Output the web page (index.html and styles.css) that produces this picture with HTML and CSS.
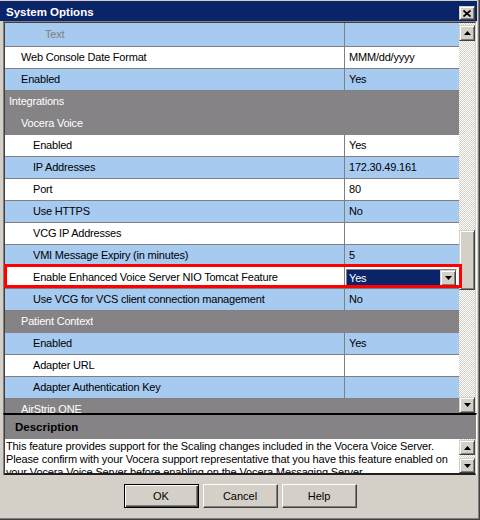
FILE: index.html
```html
<!DOCTYPE html>
<html>
<head>
<meta charset="utf-8">
<link rel="stylesheet" href="styles.css">
</head>
<body>
<div class="window">
  <div class="titlebar">
    <span class="title">System Options</span>
    <span class="close btn3d">
      <svg width="8" height="7" viewBox="0 0 8 7"><path d="M0.5 0.5 L7.5 6.5 M7.5 0.5 L0.5 6.5" stroke="#000" stroke-width="1.7" fill="none"/></svg>
    </span>
  </div>

  <div class="grid-panel">
    <div class="grid-inner">
      <div class="rows">
        <div class="row blue first"><div class="label l3 disabled">Text</div><div class="value"></div></div>
        <div class="row white"><div class="label l1">Web Console Date Format</div><div class="value">MMM/dd/yyyy</div></div>
        <div class="row blue"><div class="label l1">Enabled</div><div class="value">Yes</div></div>
        <div class="row section"><div class="label l0">Integrations</div></div>
        <div class="row section"><div class="label l1">Vocera Voice</div></div>
        <div class="row white"><div class="label l2">Enabled</div><div class="value">Yes</div></div>
        <div class="row blue"><div class="label l2">IP Addresses</div><div class="value">172.30.49.161</div></div>
        <div class="row white"><div class="label l2">Port</div><div class="value">80</div></div>
        <div class="row blue"><div class="label l2">Use HTTPS</div><div class="value">No</div></div>
        <div class="row white"><div class="label l2">VCG IP Addresses</div><div class="value"></div></div>
        <div class="row blue"><div class="label l2">VMI Message Expiry (in minutes)</div><div class="value">5</div></div>
        <div class="row white"><div class="label l2">Enable Enhanced Voice Server NIO Tomcat Feature</div>
          <div class="value combo-cell">
            <div class="combo">
              <div class="combo-field">Yes</div>
              <div class="combo-btn btn3d"><svg width="7" height="4" viewBox="0 0 7 4"><polygon points="0,0 7,0 3.5,4" fill="#000"/></svg></div>
            </div>
          </div>
        </div>
        <div class="row blue"><div class="label l2">Use VCG for VCS client connection management</div><div class="value">No</div></div>
        <div class="row section"><div class="label l1">Patient Context</div></div>
        <div class="row blue"><div class="label l2">Enabled</div><div class="value">Yes</div></div>
        <div class="row white"><div class="label l2">Adapter URL</div><div class="value"></div></div>
        <div class="row blue"><div class="label l2">Adapter Authentication Key</div><div class="value"></div></div>
        <div class="row section"><div class="label l1">AirStrip ONE</div></div>
      </div>
      <div class="vscroll">
        <div class="sbtn btn3d up"><svg width="7" height="4" viewBox="0 0 7 4"><polygon points="0,4 7,4 3.5,0" fill="#000"/></svg></div>
        <div class="track-pre"></div>
        <div class="thumb btn3d"></div>
        <div class="track-post"></div>
        <div class="sbtn btn3d"><svg width="7" height="4" viewBox="0 0 7 4"><polygon points="0,0 7,0 3.5,4" fill="#000"/></svg></div>
      </div>
      <div class="highlight"></div>
    </div>
  </div>

  <div class="desc">
    <div class="desc-head">Description</div>
    <div class="desc-body">
      <div class="desc-text">This feature provides support for the Scaling changes included in the Vocera Voice Server.<br>Please confirm with your Vocera support representative that you have this feature enabled on<br>your Vocera Voice Server before enabling on the Vocera Messaging Server.</div>
      <div class="vscroll small">
        <div class="sbtn btn3d up"><svg width="7" height="4" viewBox="0 0 7 4"><polygon points="0,4 7,4 3.5,0" fill="#000"/></svg></div>
        <div class="track-post"></div>
        <div class="sbtn btn3d"><svg width="7" height="4" viewBox="0 0 7 4"><polygon points="0,0 7,0 3.5,4" fill="#000"/></svg></div>
      </div>
    </div>
  </div>

  <div class="buttons">
    <div class="button default">OK</div>
    <div class="button">Cancel</div>
    <div class="button">Help</div>
  </div>
</div>
</body>
</html>
```
FILE: styles.css
```css
html, body {
  margin: 0;
  padding: 0;
  background: #d4d0c8;
}
body {
  font-family: "Liberation Sans", Arial, sans-serif;
  font-size: 11px;
  color: #000;
}
.window {
  width: 480px;
  height: 520px;
  box-sizing: border-box;
  background: #d4d0c8;
  box-shadow: inset -1px -1px #404040, inset -2px -2px #808080;
  display: flex;
  flex-direction: column;
  overflow: hidden;
}
.btn3d {
  box-sizing: border-box;
  background: #d4d0c8;
  border: 1px solid;
  border-color: #d4d0c8 #404040 #404040 #d4d0c8;
  box-shadow: inset 1px 1px #fff, inset -1px -1px #808080;
  display: flex;
  align-items: center;
  justify-content: center;
}
.titlebar {
  margin: 1px 3px 0 0;
  height: 20px;
  box-sizing: border-box;
  background: #0a246a;
  color: #fff;
  display: flex;
  align-items: flex-end;
  justify-content: space-between;
  padding: 0 2px 1px 6px;
}
.title {
  font-weight: bold;
  font-size: 11.5px;
  line-height: 15px;
}
.close {
  width: 16px;
  height: 14px;
}

/* grid */
.grid-panel {
  margin: 0 3px;
  border-top: 1px solid #808080;
  border-left: 1px solid #808080;
  border-right: 1px solid #fff;
}
.grid-inner {
  position: relative;
  display: flex;
  height: 390px;
  border-top: 1px solid #404040;
  border-left: 1px solid #404040;
  border-right: 1px solid #d4d0c8;
}
.rows {
  width: 454px;
  height: 390px;
  overflow: hidden;
  letter-spacing: -0.2px;
}
.row {
  display: flex;
  height: 21px;
  line-height: 21px;
  border-bottom: 1px solid #808080;
  white-space: nowrap;
}
.row.first {
  height: 23px;
  line-height: 23px;
}
.row.blue { background: #a6caf0; }
.row.white { background: #fff; }
.row.section {
  background: #858385;
  color: #fff;
  border-bottom-color: #858385;
}
.label {
  width: 339px;
  overflow: hidden;
  box-sizing: border-box;
}
.section .label { width: auto; }
.l0 { padding-left: 4px; }
.l1 { padding-left: 16px; }
.l2 { padding-left: 28px; }
.l3 { padding-left: 40px; }
.disabled { color: #808080; }
.value {
  width: 115px;
  box-sizing: border-box;
  border-left: 1px solid #808080;
  padding-left: 4px;
  overflow: hidden;
}
.combo-cell {
  padding-left: 1px;
  display: flex;
  align-items: center;
}
.combo {
  width: 111px;
  height: 18px;
  box-sizing: border-box;
  border: 1px solid;
  border-color: #808080 #fff #fff #808080;
  display: flex;
}
.combo-field {
  flex: 1;
  background: #0a246a;
  color: #fff;
  line-height: 16px;
  padding-left: 2px;
}
.combo-btn {
  width: 16px;
  height: 16px;
}
.highlight {
  position: absolute;
  left: -1px;
  top: 241px;
  width: 458px;
  height: 24px;
  box-sizing: border-box;
  border: 3px solid #ff0000;
  z-index: 5;
}

/* scrollbars */
.vscroll {
  width: 16px;
  display: flex;
  flex-direction: column;
  background-color: #fff;
  background-image: repeating-conic-gradient(#d4d0c8 0 25%, #fff 0 50%);
  background-size: 2px 2px;
}
.sbtn {
  width: 16px;
  height: 16px;
  flex: none;
}
.sbtn.up { margin-top: 2px; }
.track-pre { height: 189px; flex: none; }
.thumb { height: 60px; flex: none; }
.track-post { flex: 1; }
.vscroll.small .sbtn { height: 15px; }
.vscroll.small .sbtn.up { margin-top: 1px; }

/* description */
.desc {
  margin: 0 3px;
  border-top: 2px solid #000;
  border-left: 1px solid #808080;
  border-right: 1px solid #fff;
}
.desc-head {
  height: 24px;
  line-height: 24px;
  background: #858385;
  border-left: 1px solid #404040;
  padding-left: 10px;
  font-weight: bold;
  font-size: 11.5px;
  color: #000;
}
.desc-body {
  display: flex;
  height: 34px;
  border-left: 1px solid #404040;
  border-right: 1px solid #d4d0c8;
  border-bottom: 2px solid #202020;
}
.desc-text {
  flex: 1;
  background: #fff;
  padding: 1px 0 0 1px;
  line-height: 13px;
  letter-spacing: -0.13px;
  white-space: nowrap;
  overflow: hidden;
}

/* dialog buttons */
.buttons {
  margin-top: 9px;
  display: flex;
  justify-content: center;
  gap: 4px;
}
.button {
  width: 75px;
  height: 24px;
  box-sizing: border-box;
  display: flex;
  align-items: center;
  justify-content: center;
  background: #d4d0c8;
  border: 1px solid;
  border-color: #fff #404040 #404040 #fff;
  box-shadow: inset -1px -1px #808080;
}
.button.default {
  border-color: #000;
  box-shadow: inset 1px 1px #fff, inset -1px -1px #404040, inset -2px -2px #808080;
}
```
